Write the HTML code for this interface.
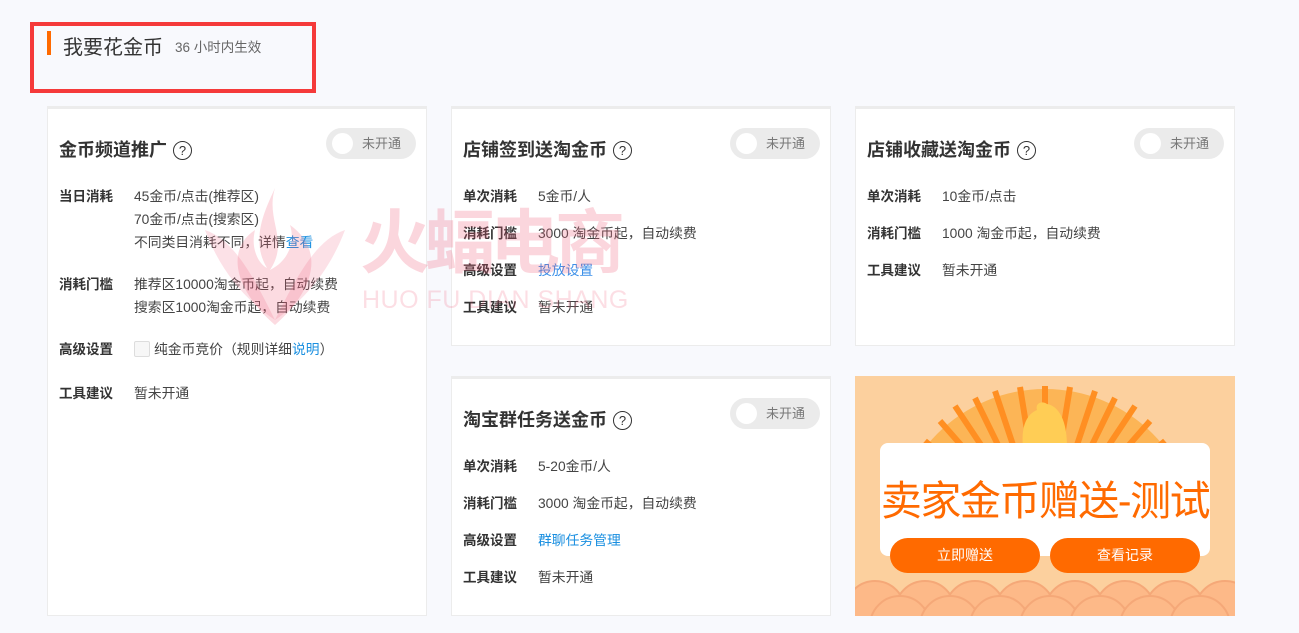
<!DOCTYPE html>
<html style="overflow:hidden"><head><meta charset="utf-8"><style>
*{margin:0;padding:0;box-sizing:border-box}
html,body{width:1299px;height:633px;overflow:hidden}
body{background:#f8f9fd;font-family:"Liberation Sans","Noto Sans CJK SC",sans-serif;position:relative;color:#333}
.abs{position:absolute}
.card{position:absolute;background:#fff;border:1px solid #ececec;border-top:3px solid #ececec;width:380px;overflow:hidden}
.title{position:absolute;left:11px;font-size:18px;font-weight:bold;color:#333;white-space:nowrap}
.q{display:inline-block;width:19px;height:19px;border:1.3px solid #333;border-radius:50%;font-size:13px;line-height:17px;text-align:center;vertical-align:1px;margin-left:6px;font-weight:normal}
.tog{position:absolute;right:10px;top:19px;width:90px;height:31px;background:#ebebeb;border-radius:16px}
.tog:before{content:"";position:absolute;left:6px;top:5px;width:21px;height:21px;border-radius:50%;background:#fff}
.tog span{position:absolute;left:36px;top:5px;font-size:13px;color:#777}
.lab{position:absolute;left:11px;font-size:13.5px;font-weight:bold;color:#333;white-space:nowrap}
.val{position:absolute;left:86px;font-size:13.8px;color:#444;white-space:nowrap}
a{color:#1a8fe0;text-decoration:none}
.btn{position:absolute;top:162px;width:150px;height:35px;background:#ff6a00;border-radius:18px;color:#fff;font-size:14px;text-align:center;line-height:35px}
</style></head><body>
<div class="abs" style="left:30px;top:22px;width:286px;height:71px;border:4px solid #f53a3a"></div>
<div class="abs" style="left:47px;top:31px;width:4px;height:24px;background:#ff6a00"></div>
<div class="abs" style="left:63px;top:31px;font-size:20px;color:#333">我要花金币</div>
<div class="abs" style="left:175px;top:36px;font-size:13.5px;color:#666">36 小时内生效</div>

<div class="card" style="left:47px;top:106px;height:510px">
<div class="title" style="top:27px">金币频道推广<span class="q">?</span></div>
<div class="tog"><span>未开通</span></div>
<div class="lab" style="top:76px">当日消耗</div>
<div class="val" style="top:76px">45金币/点击(推荐区)</div>
<div class="val" style="top:99px">70金币/点击(搜索区)</div>
<div class="val" style="top:122px">不同类目消耗不同，详情<a>查看</a></div>
<div class="lab" style="top:164px">消耗门槛</div>
<div class="val" style="top:164px">推荐区10000淘金币起，自动续费</div>
<div class="val" style="top:187px">搜索区1000淘金币起，自动续费</div>
<div class="lab" style="top:229px">高级设置</div>
<div class="val" style="top:229px"><span style="display:inline-block;width:16px;height:16px;border:1px solid #ddd;background:#f7f7f7;border-radius:2px;vertical-align:-3px;margin-right:4px"></span>纯金币竞价（规则详细<a>说明</a>）</div>
<div class="lab" style="top:273px">工具建议</div>
<div class="val" style="top:273px">暂未开通</div>
</div>

<div class="card" style="left:451px;top:106px;height:240px">
<div class="title" style="top:27px">店铺签到送淘金币<span class="q">?</span></div>
<div class="tog"><span>未开通</span></div>
<div class="lab" style="top:76px">单次消耗</div><div class="val" style="top:76px">5金币/人</div>
<div class="lab" style="top:113px">消耗门槛</div><div class="val" style="top:113px">3000 淘金币起，自动续费</div>
<div class="lab" style="top:150px">高级设置</div><div class="val" style="top:150px"><a style="color:#3b8fe8">投放设置</a></div>
<div class="lab" style="top:187px">工具建议</div><div class="val" style="top:187px">暂未开通</div>
</div>

<div class="card" style="left:855px;top:106px;height:240px">
<div class="title" style="top:27px">店铺收藏送淘金币<span class="q">?</span></div>
<div class="tog"><span>未开通</span></div>
<div class="lab" style="top:76px">单次消耗</div><div class="val" style="top:76px">10金币/点击</div>
<div class="lab" style="top:113px">消耗门槛</div><div class="val" style="top:113px">1000 淘金币起，自动续费</div>
<div class="lab" style="top:150px">工具建议</div><div class="val" style="top:150px">暂未开通</div>
</div>

<div class="card" style="left:451px;top:376px;height:240px">
<div class="title" style="top:27px">淘宝群任务送金币<span class="q">?</span></div>
<div class="tog"><span>未开通</span></div>
<div class="lab" style="top:76px">单次消耗</div><div class="val" style="top:76px">5-20金币/人</div>
<div class="lab" style="top:113px">消耗门槛</div><div class="val" style="top:113px">3000 淘金币起，自动续费</div>
<div class="lab" style="top:150px">高级设置</div><div class="val" style="top:150px"><a>群聊任务管理</a></div>
<div class="lab" style="top:187px">工具建议</div><div class="val" style="top:187px">暂未开通</div>
</div>

<div class="abs" style="left:855px;top:376px;width:380px;height:240px;background:#fcd09e;overflow:hidden">
<svg width="380" height="240" style="position:absolute;left:0;top:0">
<defs><clipPath id="c"><rect x="0" y="0" width="380" height="70"/></clipPath></defs>
<g clip-path="url(#c)">
<circle cx="190" cy="165" r="152" fill="#fcb556"/>
<g stroke="#ff8f22" stroke-width="6">
<line x1="190" y1="165" x2="40" y2="160"/><line x1="190" y1="165" x2="50" y2="110"/><line x1="190" y1="165" x2="70" y2="65"/><line x1="190" y1="165" x2="100" y2="30"/><line x1="190" y1="165" x2="140" y2="15"/><line x1="190" y1="165" x2="190" y2="10"/><line x1="190" y1="165" x2="240" y2="15"/><line x1="190" y1="165" x2="280" y2="30"/><line x1="190" y1="165" x2="310" y2="65"/><line x1="190" y1="165" x2="330" y2="110"/>
<line x1="190" y1="165" x2="120" y2="22"/><line x1="190" y1="165" x2="165" y2="11"/><line x1="190" y1="165" x2="215" y2="11"/><line x1="190" y1="165" x2="260" y2="22"/><line x1="190" y1="165" x2="85" y2="45"/><line x1="190" y1="165" x2="295" y2="45"/>
</g>
<path d="M168 70 C166 50 172 38 182 34 C180 28 186 24 192 28 C204 30 212 45 212 70Z" fill="#ffcd55"/>
</g>
<g fill="#fdb988" stroke="#f5a878" stroke-width="2">
<circle cx="20" cy="235" r="30"/><circle cx="70" cy="235" r="30"/><circle cx="120" cy="235" r="30"/><circle cx="170" cy="235" r="30"/><circle cx="220" cy="235" r="30"/><circle cx="270" cy="235" r="30"/><circle cx="320" cy="235" r="30"/><circle cx="370" cy="235" r="30"/>
<circle cx="45" cy="250" r="30"/><circle cx="95" cy="250" r="30"/><circle cx="145" cy="250" r="30"/><circle cx="195" cy="250" r="30"/><circle cx="245" cy="250" r="30"/><circle cx="295" cy="250" r="30"/><circle cx="345" cy="250" r="30"/>
</g>
</svg>
<div class="abs" style="left:25px;top:67px;width:330px;height:113px;background:#fff;border-radius:8px"></div>
<div class="abs" style="left:15px;top:91px;width:350px;text-align:center;font-size:41px;color:#ff6a00;white-space:nowrap;letter-spacing:-1.5px">卖家金币赠送-测试</div>
<div class="btn" style="left:35px">立即赠送</div>
<div class="btn" style="left:195px">查看记录</div>
</div>

<svg class="abs" style="left:195px;top:180px" width="160" height="150"><path d="M80 8 C70 40 95 60 75 90 C95 80 100 60 95 45 C130 70 120 110 80 145 C40 110 30 70 60 50 C55 70 65 85 72 88 C55 60 70 30 80 8Z" fill="rgba(240,90,120,0.22)"/><path d="M10 50 C40 60 60 100 80 140 C50 120 25 90 10 50Z M150 50 C120 60 100 100 80 140 C110 120 135 90 150 50Z" fill="rgba(240,90,120,0.18)"/></svg>
<div class="abs" style="left:360px;top:203px;font-size:70px;line-height:80px;font-weight:bold;color:rgba(240,90,120,0.25);letter-spacing:-5px;white-space:nowrap">火蝠电商</div>
<div class="abs" style="left:362px;top:286px;font-size:25px;color:rgba(240,90,120,0.2);white-space:nowrap;letter-spacing:0.5px">HUO FU DIAN SHANG</div>
</body></html>
